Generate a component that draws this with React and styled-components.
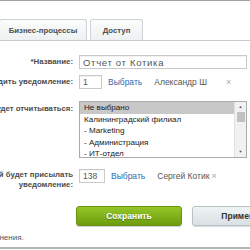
import React from 'react';
import styled, { createGlobalStyle } from 'styled-components';

const GlobalStyle = createGlobalStyle`
  html, body {
    margin: 0;
    padding: 0;
    background: #fff;
  }
  body {
    font-family: 'Liberation Sans', Arial, sans-serif;
  }
`;

const TABS = [
  { id: 1, title: 'Общие', width: 113 },
  { id: 2, title: 'Бизнес-процессы', width: 88 },
  { id: 3, title: 'Доступ', width: 53 },
];

const OPTIONS = [
  'Не выбрано',
  'Калининградский филиал',
  '- Marketing',
  '- Администрация',
  '- ИТ-отдел',
];

const App = () => {
  return (
    <Frame>
      <GlobalStyle />
      <Page>
        <TabBar>
          {TABS.map(t => (
            <Tab key={t.id} $width={t.width}>
              {t.title}
            </Tab>
          ))}
        </TabBar>

        <Form>
          <Row>
            <Label>*Название:</Label>
            <Input $width={168} $wide defaultValue="Отчет от Котика" />
          </Row>

          <Row>
            <Label>Когда приходить уведомление:</Label>
            <Field>
              <Input $width={23} defaultValue="1" />
              <Link>Выбрать</Link>
              <Person>Александр Ш</Person>
              <Remove $gap={19}>×</Remove>
            </Field>
          </Row>

          <Row $top $space={12}>
            <Label $pad={3}>Кто будет отчитываться:</Label>
            <ListBox>
              <Options>
                {OPTIONS.map((o, i) => (
                  <Option key={i} $selected={i === 0}>
                    {o}
                  </Option>
                ))}
              </Options>
              <Scroll>
                <Arrow>▲</Arrow>
                <Thumb />
                <Track />
                <Arrow>▼</Arrow>
              </Scroll>
            </ListBox>
          </Row>

          <Row $top $space={11}>
            <Label $wrap $pad={1}>
              Сотрудник, который будет присылать
              <br />
              уведомление:
            </Label>
            <Field>
              <Input $width={26} defaultValue="138" />
              <Link>Выбрать</Link>
              <Person>Сергей Котик</Person>
              <Remove $gap={2}>×</Remove>
            </Field>
          </Row>
        </Form>

        <Buttons>
          <SaveButton>Сохранить</SaveButton>
          <ApplyButton>Применить</ApplyButton>
        </Buttons>

        <Note>* — поля, обязательные для заполнения.</Note>
      </Page>
    </Frame>
  );
};

const Frame = styled.div`
  width: 250px;
  height: 249px;
  box-sizing: border-box;
  overflow: hidden;
  border-top: 1px solid #a3a3a3;
  border-bottom: 2px solid #b5b5b5;
`;

const Page = styled.div`
  margin-left: -120px;
  width: 372px;
`;

const TabBar = styled.div`
  display: flex;
  align-items: flex-end;
  gap: 3px;
  margin-top: 18px;
  padding-left: 3px;
  border-bottom: 1px solid #c5cbce;
`;

const Tab = styled.div`
  width: ${p => p.$width}px;
  height: 21px;
  box-sizing: border-box;
  display: flex;
  align-items: center;
  justify-content: center;
  border: 1px solid #cdd3d6;
  border-bottom: none;
  border-radius: 3px 3px 0 0;
  background: linear-gradient(#fbfcfc, #eef1f2);
  color: #4a4f52;
  font-weight: bold;
  font-size: 7.8px;
`;

const Form = styled.div`
  display: flex;
  flex-direction: column;
  gap: 6px;
  margin-top: 14px;
`;

const Row = styled.div`
  display: flex;
  align-items: ${p => (p.$top ? 'flex-start' : 'center')};
  gap: 6px;
  margin-top: ${p => (p.$space ? p.$space - 6 : 0)}px;
`;

const Label = styled.div`
  width: 193px;
  flex: none;
  display: ${p => (p.$wrap ? 'block' : 'flex')};
  justify-content: flex-end;
  text-align: right;
  white-space: nowrap;
  font-weight: bold;
  font-size: 7.8px;
  line-height: 10px;
  color: #4d4d4d;
  padding-top: ${p => p.$pad || 0}px;
`;

const Input = styled.input`
  width: ${p => p.$width}px;
  height: 14px;
  box-sizing: border-box;
  border: 1px solid #c9c9c9;
  box-shadow: inset 0 1px 1px rgba(0, 0, 0, 0.06);
  padding: 0 3px;
  font-family: 'Liberation Sans', Arial, sans-serif;
  font-size: ${p => (p.$wide ? '9.5px' : '8.5px')};
  letter-spacing: ${p => (p.$wide ? '0.7px' : '0')};
  color: #555;
  outline: none;
  flex: none;
`;

const Field = styled.div`
  display: flex;
  align-items: center;
  font-size: 8.5px;
`;

const Link = styled.span`
  color: #2a6db3;
  margin-left: 6px;
`;

const Person = styled.span`
  color: #555;
  margin-left: 12px;
`;

const Remove = styled.span`
  color: #aaa;
  font-size: 9px;
  margin-left: ${p => p.$gap}px;
`;

const ListBox = styled.div`
  width: 168px;
  height: 57px;
  box-sizing: border-box;
  border: 1px solid #aaa;
  display: flex;
  overflow: hidden;
`;

const Options = styled.div`
  flex: 1;
  display: flex;
  flex-direction: column;
`;

const Option = styled.div`
  height: 11.5px;
  line-height: 11.5px;
  padding-left: 4px;
  font-size: 8.1px;
  color: #222;
  flex: none;
  background: ${p => (p.$selected ? '#c8c8c8' : 'transparent')};
`;

const Scroll = styled.div`
  width: 11px;
  flex: none;
  display: flex;
  flex-direction: column;
  align-items: center;
  background: #f1f1f1;
  border-left: 1px solid #e2e2e2;
`;

const Arrow = styled.div`
  height: 10px;
  line-height: 10px;
  font-size: 4px;
  color: #555;
`;

const Thumb = styled.div`
  width: 8px;
  height: 10px;
  background: #c1c1c1;
`;

const Track = styled.div`
  flex: 1;
`;

const Buttons = styled.div`
  display: flex;
  gap: 10px;
  margin-top: 16px;
  padding-left: 196px;
`;

const BaseButton = styled.div`
  width: 106px;
  height: 20px;
  box-sizing: border-box;
  border-radius: 3px;
  display: flex;
  align-items: center;
  justify-content: center;
  font-weight: bold;
  font-size: 8.5px;
  flex: none;
`;

const SaveButton = styled(BaseButton)`
  background: linear-gradient(#95c627, #6c9d0e);
  border: 1px solid #6a9410;
  color: #fff;
  text-shadow: 0 1px 1px rgba(0, 0, 0, 0.3);
  box-shadow: 0 1px 1px rgba(0, 0, 0, 0.2);
`;

const ApplyButton = styled(BaseButton)`
  background: linear-gradient(#f0f4f5, #d9e0e3);
  border: 1px solid #b9c1c4;
  color: #333;
  box-shadow: 0 1px 1px rgba(0, 0, 0, 0.15);
`;

const Note = styled.div`
  margin-top: 7px;
  margin-left: -10px;
  font-size: 8px;
  line-height: 10px;
  color: #555;
  white-space: nowrap;
`;

export default App;
